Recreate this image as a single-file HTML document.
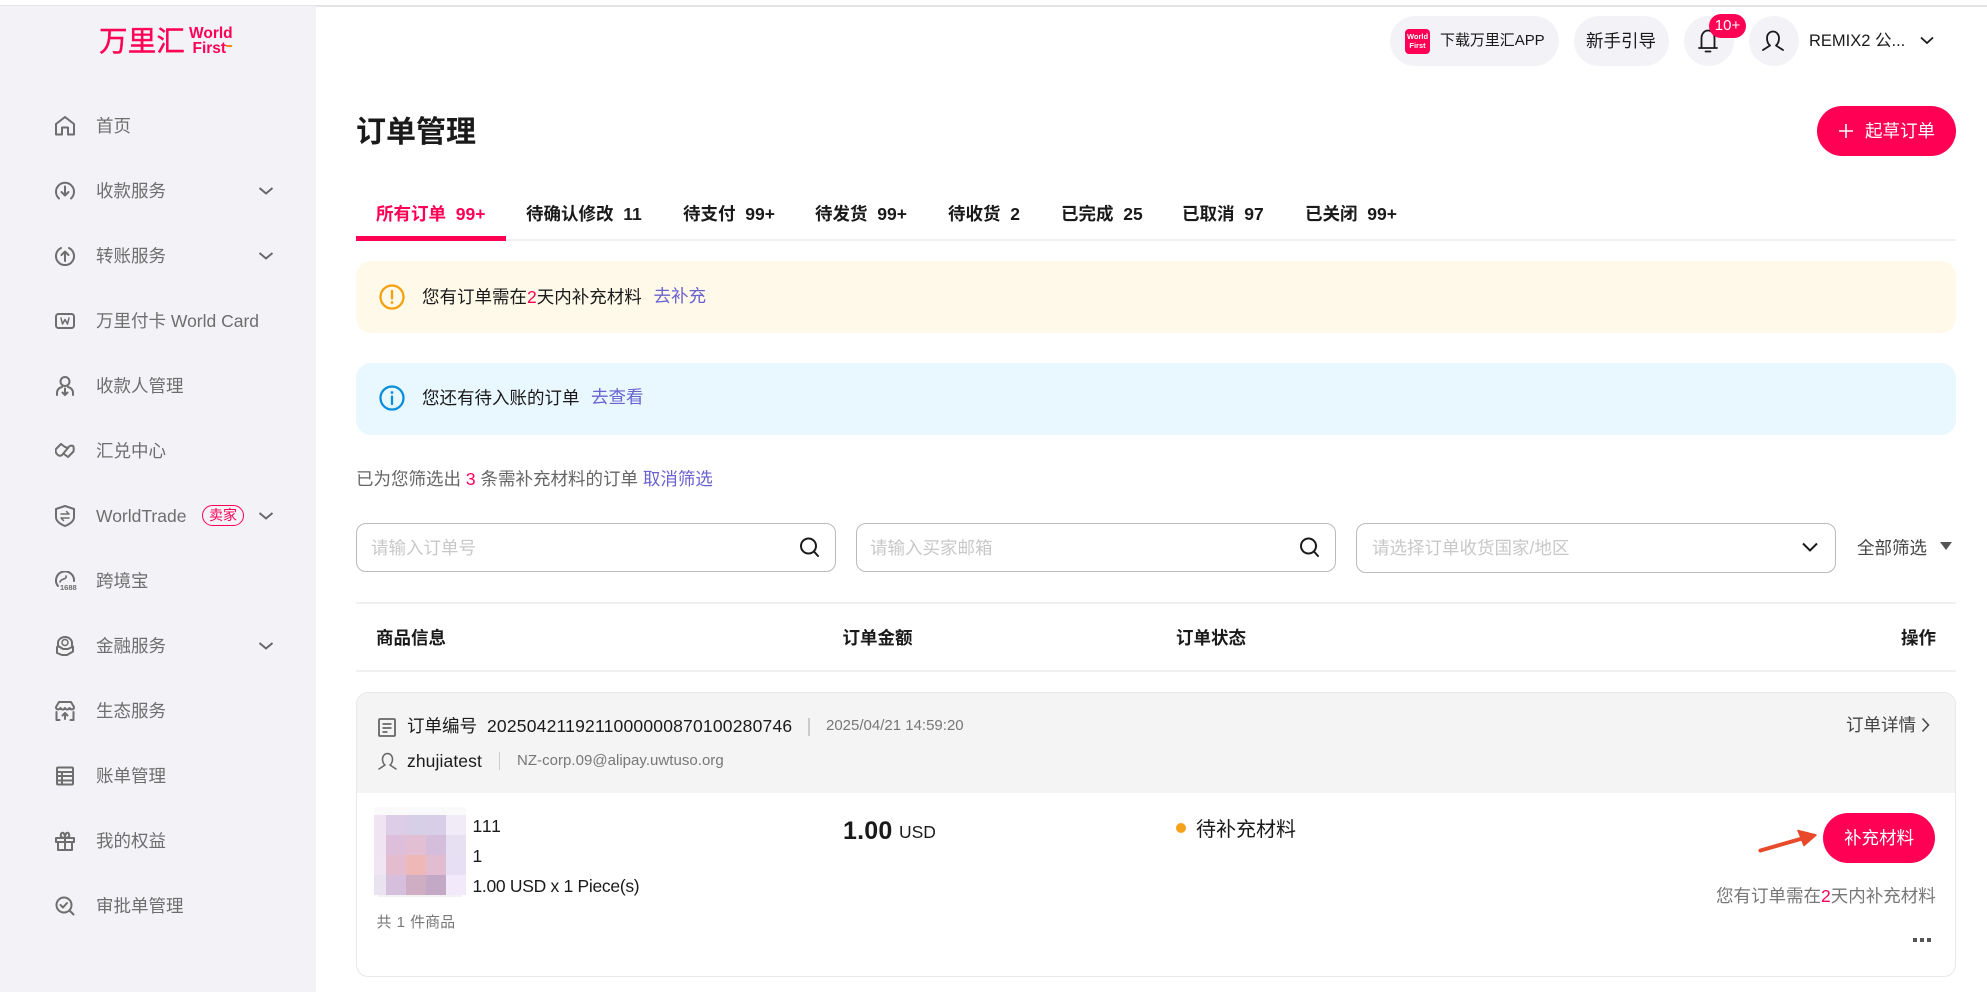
<!DOCTYPE html>
<html lang="zh-CN"><head><meta charset="utf-8"><title>订单管理</title>
<style>
*{box-sizing:border-box}
html,body{margin:0;padding:0;width:1987px;height:992px;overflow:hidden;background:#fff}
body{position:relative;font-family:"Liberation Sans","Noto Sans CJK SC",sans-serif;font-size:17.5px;color:#1a1a1a}
.a{position:absolute}
.t{position:absolute;white-space:nowrap;line-height:30px;height:30px}
.m{color:#6e6e6e;left:96px}
.i{position:absolute;left:55px;width:20px;height:20px;fill:none;stroke:#6e6e6e;stroke-width:2;stroke-linecap:round;stroke-linejoin:round}
.c{position:absolute;left:259px;width:14px;height:8px;fill:none;stroke:#666;stroke-width:1.9}
.b{font-weight:700}
.p{color:#ff0055}
.l{color:#6a62cf}
.g{color:#777}
.s{font-size:15px}
.pill{position:absolute;top:16px;height:50px;border-radius:25px;background:#f2f2f7}
.inp{position:absolute;top:523px;height:49px;border:1.25px solid #b9b9b9;border-radius:10px;background:#fff}
.ph{color:#c8c8c8}
.sv{position:absolute;width:22px;height:22px;fill:none;stroke:#1a1a1a;stroke-width:2;stroke-linecap:round}
.hl{position:absolute;left:356px;width:1600px;height:2px;background:#f0f0f0}
.vs{position:absolute;width:1.5px;height:18px;background:#ccc}
.tab{position:absolute;top:199px;font-weight:700;white-space:nowrap;line-height:30px;height:30px}
.mo{position:absolute}
</style></head><body>
<div class="a" style="left:0;top:5px;width:1987px;height:1.5px;background:#e4e4e4"></div>
<div class="a" style="left:0;top:6px;width:316px;height:986px;background:#f2f2f7"></div>

<!-- logo -->
<div class="t p" style="left:99px;top:27px;font-size:28.5px;height:30px;line-height:30px;letter-spacing:.2px;-webkit-text-stroke:.4px #ff0055">万里汇</div>
<div class="t p b" style="left:189px;top:26px;font-size:15.5px;height:16px;line-height:16px">World</div>
<div class="t p b" style="left:192.5px;top:41px;font-size:15.5px;height:16px;line-height:16px">First</div>
<div class="a" style="left:226px;top:45px;width:6px;height:2px;background:#ff8a1f"></div>

<!-- sidebar -->
<svg class="i" style="top:116px" viewBox="0 0 20 20"><path d="M1 18.5V8L10 1l9 7v10.5h-6v-7H7v7z"/></svg>
<div class="t m" style="top:111px">首页</div>
<svg class="i" style="top:181px" viewBox="0 0 20 20"><path d="M4 17.5A9 9 0 1 1 16 17.5"/><path d="M10 5.5v9M6.5 11l3.5 3.5 3.500-3.500"/></svg>
<div class="t m" style="top:176px">收款服务</div>
<svg class="c" style="top:187px" viewBox="0 0 14 8"><path d="M.5 1l6.500 5.500L13.500 1"/></svg>
<svg class="i" style="top:246px" viewBox="0 0 20 20"><path d="M6 2A9 9 0 1 0 14 2"/><path d="M10 15V5.5M6.500 9L10 5.500 13.500 9"/></svg>
<div class="t m" style="top:241px">转账服务</div>
<svg class="c" style="top:252px" viewBox="0 0 14 8"><path d="M.5 1l6.500 5.500L13.500 1"/></svg>
<svg class="i" style="top:311px" viewBox="0 0 20 20"><rect x="1" y="3" width="18" height="14" rx="2.5"/><path d="M6 7l1.500 6L10 8.500 12.500 13 14 7" stroke-width="1.5"/></svg>
<div class="t m" style="top:306px">万里付卡 World Card</div>
<svg class="i" style="top:376px" viewBox="0 0 20 20"><circle cx="10" cy="5.5" r="4.5"/><path d="M2 19v-2a6 6 0 0 1 5-6M18 19v-2a6 6 0 0 0-5-6"/><path d="M10 12.5v6.500M7.500 16.500L10 19l2.500-2.500"/></svg>
<div class="t m" style="top:371px">收款人管理</div>
<svg class="i" style="top:441px" viewBox="0 0 20 20"><path d="M6 3L1 8c-1 2 0 5 2 6 1 1 3 1 4 0l6-7c1-2 3-3 5-2 1 1 1 5 0 6l-5 5-4-3"/><path d="M6 3l4 3M13 7l-3-1"/></svg>
<div class="t m" style="top:436px">汇兑中心</div>
<svg class="i" style="top:505px;height:22px" viewBox="0 0 20 22"><path d="M10 1l9 3v8c0 4-4 7-9 9-5-2-9-5-9-9V4z"/><path d="M6 9h8l-2.500-2.500M14 13H6l2.500 2.500" stroke-width="1.5"/></svg>
<div class="t m" style="top:501px">WorldTrade</div>
<div class="a p" style="left:202px;top:505px;width:42px;height:21px;border:1.25px solid #ff0055;border-radius:11px;font-size:14px;line-height:18px;text-align:center;white-space:nowrap">卖家</div>
<svg class="c" style="top:512px" viewBox="0 0 14 8"><path d="M.5 1l6.500 5.500L13.500 1"/></svg>
<svg class="i" style="top:571px" viewBox="0 0 20 20"><path d="M3 15A9 9 0 1 1 19 10"/><path d="M5 11c1-4 7-2 6-6" stroke-width="1.6"/></svg>
<div class="a b" style="left:60px;top:584px;font-size:7.5px;line-height:8px;color:#6e6e6e;white-space:nowrap">1688</div>
<div class="t m" style="top:566px">跨境宝</div>
<svg class="i" style="top:636px" viewBox="0 0 20 20"><path d="M3 10V7a7 6 0 0 1 14 0v3"/><circle cx="10" cy="6.5" r="3" stroke-width="1.5"/><path d="M2 11l2-.5 4 2.500h5l5-2.500v5L12 19H7l-5-2z"/></svg>
<div class="t m" style="top:631px">金融服务</div>
<svg class="c" style="top:642px" viewBox="0 0 14 8"><path d="M.5 1l6.500 5.500L13.500 1"/></svg>
<svg class="i" style="top:701px" viewBox="0 0 20 20"><path d="M4 1h12l3 5c0 3-3 3-4.500 1C13.500 9 11 9 10 7 9 9 6.500 9 5.500 7 4 9 1 9 1 6z"/><path d="M1.500 11v8h3M18.500 11v8h-3M10 18v-6M7.500 14.500L10 12l2.500 2.500"/></svg>
<div class="t m" style="top:696px">生态服务</div>
<svg class="i" style="top:766px" viewBox="0 0 20 20"><rect x="2" y="1.5" width="16" height="17" rx="1"/><path d="M2 6h16M2 10h16M2 14.500h16M7 6v12.500"/></svg>
<div class="t m" style="top:761px">账单管理</div>
<svg class="i" style="top:831px" viewBox="0 0 20 20"><path d="M1 7h18v4H1zM3 11v8h14v-8M10 7v12M10 7C7 7 5 5.500 6 3s4-1.500 4 4c0-5.500 3-6.500 4-4s-1 4-4 4"/></svg>
<div class="t m" style="top:826px">我的权益</div>
<svg class="i" style="top:896px" viewBox="0 0 20 20"><circle cx="9" cy="9" r="7.5"/><path d="M5.500 9l2.500 2.500 4-4.500M14.500 14.500l4 4"/></svg>
<div class="t m" style="top:891px">审批单管理</div>

<!-- top bar -->
<div class="pill" style="left:1390px;width:169px"></div>
<div class="a" style="left:1405px;top:29px;width:25px;height:25px;border-radius:4px;background:#ff0055;color:#fff;font-size:7.5px;line-height:8.5px;text-align:center;font-weight:700;padding-top:4px">World<br>First</div>
<div class="t s" style="left:1440px;top:26px;letter-spacing:-.05px">下载万里汇APP</div>
<div class="pill" style="left:1574px;width:95px"></div>
<div class="t" style="left:1586px;top:26px">新手引导</div>
<div class="pill" style="left:1684px;width:50px"></div>
<svg class="a" style="left:1696px;top:27px;width:24px;height:26px;fill:none;stroke:#1a1a1a;stroke-width:1.8;stroke-linecap:round;stroke-linejoin:round" viewBox="0 0 24 26"><path d="M5.500 21V11a6.500 7.500 0 0 1 13 0v10M3 21h18M9.500 24.500h5"/></svg>
<div class="a" style="left:1709px;top:14px;width:37px;height:24px;border-radius:12px;background:#ff0055;color:#fff;font-size:15px;line-height:24px;text-align:center">10+</div>
<div class="pill" style="left:1749px;width:50px"></div>
<svg class="a" style="left:1761px;top:29px;width:24px;height:24px;fill:none;stroke:#1a1a1a;stroke-width:1.8;stroke-linecap:round;stroke-linejoin:round" viewBox="0 0 24 24"><path d="M9 16.500C6.500 14.500 6 11 6 9a6 6.500 0 0 1 12 0c0 2-.5 5.500-3 7.500l7 4.500M9 16.500L2 21"/></svg>
<div class="t" style="left:1809px;top:26px;font-size:16.5px">REMIX2 公...</div>
<svg class="a" style="left:1920px;top:36px;width:14px;height:9px;fill:none;stroke:#1a1a1a;stroke-width:1.8" viewBox="0 0 14 9"><path d="M1 1.500l6 5.500 6-5.500"/></svg>

<!-- title -->
<div class="t b" style="left:356px;top:113px;font-size:30px;height:40px;line-height:40px">订单管理</div>
<div class="a" style="left:1817px;top:105.500px;width:139px;height:50px;border-radius:25px;background:#ff0055"></div>
<svg class="a" style="left:1839px;top:123.500px;width:14px;height:14px;stroke:#fff;stroke-width:1.6" viewBox="0 0 14 14"><path d="M7 0v14M0 7h14"/></svg>
<div class="t" style="left:1865px;top:115.500px;color:#fff">起草订单</div>

<!-- tabs -->
<div class="tab p" style="left:376px">所有订单&nbsp; 99+</div>
<div class="tab" style="left:526px">待确认修改&nbsp; 11</div>
<div class="tab" style="left:683px">待支付&nbsp; 99+</div>
<div class="tab" style="left:815px">待发货&nbsp; 99+</div>
<div class="tab" style="left:948px">待收货&nbsp; 2</div>
<div class="tab" style="left:1061px">已完成&nbsp; 25</div>
<div class="tab" style="left:1182px">已取消&nbsp; 97</div>
<div class="tab" style="left:1305px">已关闭&nbsp; 99+</div>
<div class="hl" style="top:239px"></div>
<div class="a" style="left:356px;top:235.500px;width:150px;height:5px;background:#ff0055"></div>

<!-- alerts -->
<div class="a" style="left:356px;top:261px;width:1600px;height:71.500px;border-radius:15px;background:#fff9ea"></div>
<svg class="a" style="left:379px;top:284px;width:26px;height:26px" viewBox="0 0 26 26"><circle cx="13" cy="13" r="11.5" fill="none" stroke="#f5a10f" stroke-width="2.3"/><path d="M13 7v7.500" stroke="#f5a10f" stroke-width="2.3" stroke-linecap="round"/><circle cx="13" cy="18.500" r="1.4" fill="#f5a10f"/></svg>
<div class="t" style="left:422px;top:282px">您有订单需在<span class="p">2</span>天内补充材料</div>
<div class="t l" style="left:653.500px;top:281px">去补充</div>

<div class="a" style="left:356px;top:363px;width:1600px;height:71.500px;border-radius:15px;background:#e9f7ff"></div>
<svg class="a" style="left:379px;top:385px;width:26px;height:26px" viewBox="0 0 26 26"><circle cx="13" cy="13" r="11.5" fill="none" stroke="#0a8fdc" stroke-width="2.3"/><path d="M13 11.500V19" stroke="#0a8fdc" stroke-width="2.3" stroke-linecap="round"/><circle cx="13" cy="7.500" r="1.4" fill="#0a8fdc"/></svg>
<div class="t" style="left:422px;top:383px">您还有待入账的订单</div>
<div class="t l" style="left:591px;top:382px">去查看</div>

<div class="t" style="left:356px;top:464px;color:#666">已为您筛选出 <span class="p">3</span> 条需补充材料的订单 <span class="l">取消筛选</span></div>

<!-- filters -->
<div class="inp" style="left:356px;width:480px"></div>
<div class="t ph" style="left:371px;top:533px">请输入订单号</div>
<svg class="sv" style="left:798px;top:536px" viewBox="0 0 22 22"><circle cx="10.500" cy="10" r="7.500"/><path d="M16 15.500l4 4.500"/></svg>
<div class="inp" style="left:855.500px;width:480px"></div>
<div class="t ph" style="left:870px;top:533px">请输入买家邮箱</div>
<svg class="sv" style="left:1298px;top:536px" viewBox="0 0 22 22"><circle cx="10.500" cy="10" r="7.500"/><path d="M16 15.500l4 4.500"/></svg>
<div class="inp" style="left:1355.500px;width:480px;height:50px"></div>
<div class="t ph" style="left:1372px;top:533px">请选择订单收货国家/地区</div>
<svg class="a" style="left:1802px;top:542px;width:16px;height:10px;fill:none;stroke:#1a1a1a;stroke-width:2" viewBox="0 0 16 10"><path d="M1 1.500l7 7 7-7"/></svg>
<div class="t" style="left:1857px;top:533px;color:#444">全部筛选</div>
<div class="a" style="left:1940px;top:542px;width:0;height:0;border-left:6px solid transparent;border-right:6px solid transparent;border-top:8px solid #555"></div>

<!-- table head -->
<div class="hl" style="top:602px"></div>
<div class="t b" style="left:376px;top:623px">商品信息</div>
<div class="t b" style="left:842.500px;top:623px">订单金额</div>
<div class="t b" style="left:1176px;top:623px">订单状态</div>
<div class="t b" style="left:1901px;top:623px">操作</div>
<div class="hl" style="top:670px"></div>

<!-- card -->
<div class="a" style="left:356px;top:691.500px;width:1600px;height:285.500px;border:1.25px solid #e8e8e8;border-radius:12px;overflow:hidden;background:#fff">
<div style="height:100px;background:#f4f4f4"></div></div>
<svg class="a" style="left:378px;top:718px;width:18px;height:19px;fill:none;stroke:#666;stroke-width:1.8" viewBox="0 0 18 19"><rect x="1" y="1" width="16" height="17" rx="1"/><path d="M4.500 6h9M4.500 10h9M4.500 14h5"/></svg>
<div class="t" style="left:407px;top:711px">订单编号</div>
<div class="t" style="left:487px;top:711px;letter-spacing:.2px">2025042119211000000870100280746</div>
<div class="vs" style="left:808px;top:718px"></div>
<div class="t s g" style="left:826px;top:711px">2025/04/21 14:59:20</div>
<svg class="a" style="left:378px;top:752px;width:19px;height:19px;fill:none;stroke:#666;stroke-width:1.5;stroke-linecap:round;stroke-linejoin:round" viewBox="0 0 19 19"><path d="M7 13C5 11.500 4.500 9 4.500 7a5 5.500 0 0 1 10 0c0 2-.5 4.500-2.500 6l6 4M7 13l-6 4"/></svg>
<div class="t" style="left:407px;top:746px;letter-spacing:.1px">zhujiatest</div>
<div class="vs" style="left:498.500px;top:752px"></div>
<div class="t s g" style="left:517px;top:746px;letter-spacing:.03px">NZ-corp.09@alipay.uwtuso.org</div>
<div class="t" style="left:1846px;top:710px;color:#444">订单详情</div>
<svg class="a" style="left:1921px;top:717px;width:9px;height:16px;fill:none;stroke:#444;stroke-width:1.5" viewBox="0 0 9 16"><path d="M1.500 1.500L7.500 8l-6 6.500"/></svg>

<!-- mosaic -->
<div class="mo" style="left:374px;top:807px;width:92px;height:8px;background:#fafafa"></div>
<div class="mo" style="left:374px;top:815px;width:12px;height:20px;background:#f0e4f2"></div><div class="mo" style="left:386px;top:815px;width:20px;height:20px;background:#ddcde6"></div><div class="mo" style="left:406px;top:815px;width:20px;height:20px;background:#d6cfe7"></div><div class="mo" style="left:426px;top:815px;width:20px;height:20px;background:#d8cee8"></div><div class="mo" style="left:446px;top:815px;width:20px;height:20px;background:#f0ebf7"></div>
<div class="mo" style="left:374px;top:835px;width:12px;height:20px;background:#f0e4f2"></div><div class="mo" style="left:386px;top:835px;width:20px;height:20px;background:#ddbfdb"></div><div class="mo" style="left:406px;top:835px;width:20px;height:20px;background:#e3bfd3"></div><div class="mo" style="left:426px;top:835px;width:20px;height:20px;background:#d5bedc"></div><div class="mo" style="left:446px;top:835px;width:20px;height:20px;background:#e7dff2"></div>
<div class="mo" style="left:374px;top:855px;width:12px;height:20px;background:#efe5f3"></div><div class="mo" style="left:386px;top:855px;width:20px;height:20px;background:#e3bcd0"></div><div class="mo" style="left:406px;top:855px;width:20px;height:20px;background:#efb8b8"></div><div class="mo" style="left:426px;top:855px;width:20px;height:20px;background:#e2bdd2"></div><div class="mo" style="left:446px;top:855px;width:20px;height:20px;background:#e7dff3"></div>
<div class="mo" style="left:374px;top:875px;width:12px;height:20px;background:#e9e2ef"></div><div class="mo" style="left:386px;top:875px;width:20px;height:20px;background:#d5bfdd"></div><div class="mo" style="left:406px;top:875px;width:20px;height:20px;background:#cfaec3"></div><div class="mo" style="left:426px;top:875px;width:20px;height:20px;background:#c3a9c5"></div><div class="mo" style="left:446px;top:875px;width:20px;height:20px;background:#f2eafa"></div>
<div class="mo" style="left:378px;top:895px;width:84px;height:2px;background:#f2f2f2"></div>

<div class="t" style="left:472.500px;top:811px;letter-spacing:.9px">111</div>
<div class="t" style="left:472.500px;top:841px">1</div>
<div class="t" style="left:472.500px;top:871px;letter-spacing:-.3px">1.00 USD x 1 Piece(s)</div>
<div class="t s g" style="left:376.500px;top:908px;word-spacing:1px">共 1 件商品</div>
<div class="t b" style="left:843px;top:816px;font-size:25px;letter-spacing:.2px">1.00</div>
<div class="t" style="left:899px;top:817px">USD</div>
<div class="a" style="left:1176px;top:823px;width:10px;height:10px;border-radius:50%;background:#f5a11a"></div>
<div class="t" style="left:1196px;top:815px;font-size:20px">待补充材料</div>

<div class="a" style="left:1823px;top:812.500px;width:112px;height:50px;border-radius:25px;background:#ff0055"></div>
<div class="t" style="left:1844px;top:823px;color:#fff">补充材料</div>
<svg class="a" style="left:1755px;top:825px;width:66px;height:30px;fill:none;stroke:#e8492a;stroke-linecap:round;stroke-linejoin:round" viewBox="0 0 66 30"><path d="M5.500 25.500L56 11" stroke-width="4"/><path d="M43 5.500L61 10 49 20.500z" fill="#e8492a" stroke-width="1.5"/></svg>
<div class="t" style="left:1716px;top:881px;color:#777">您有订单需在<span class="p">2</span>天内补充材料</div>
<div class="a" style="left:1913px;top:938px;width:4px;height:4px;background:#555"></div>
<div class="a" style="left:1920px;top:938px;width:4px;height:4px;background:#555"></div>
<div class="a" style="left:1927px;top:938px;width:4px;height:4px;background:#555"></div>
</body></html>
